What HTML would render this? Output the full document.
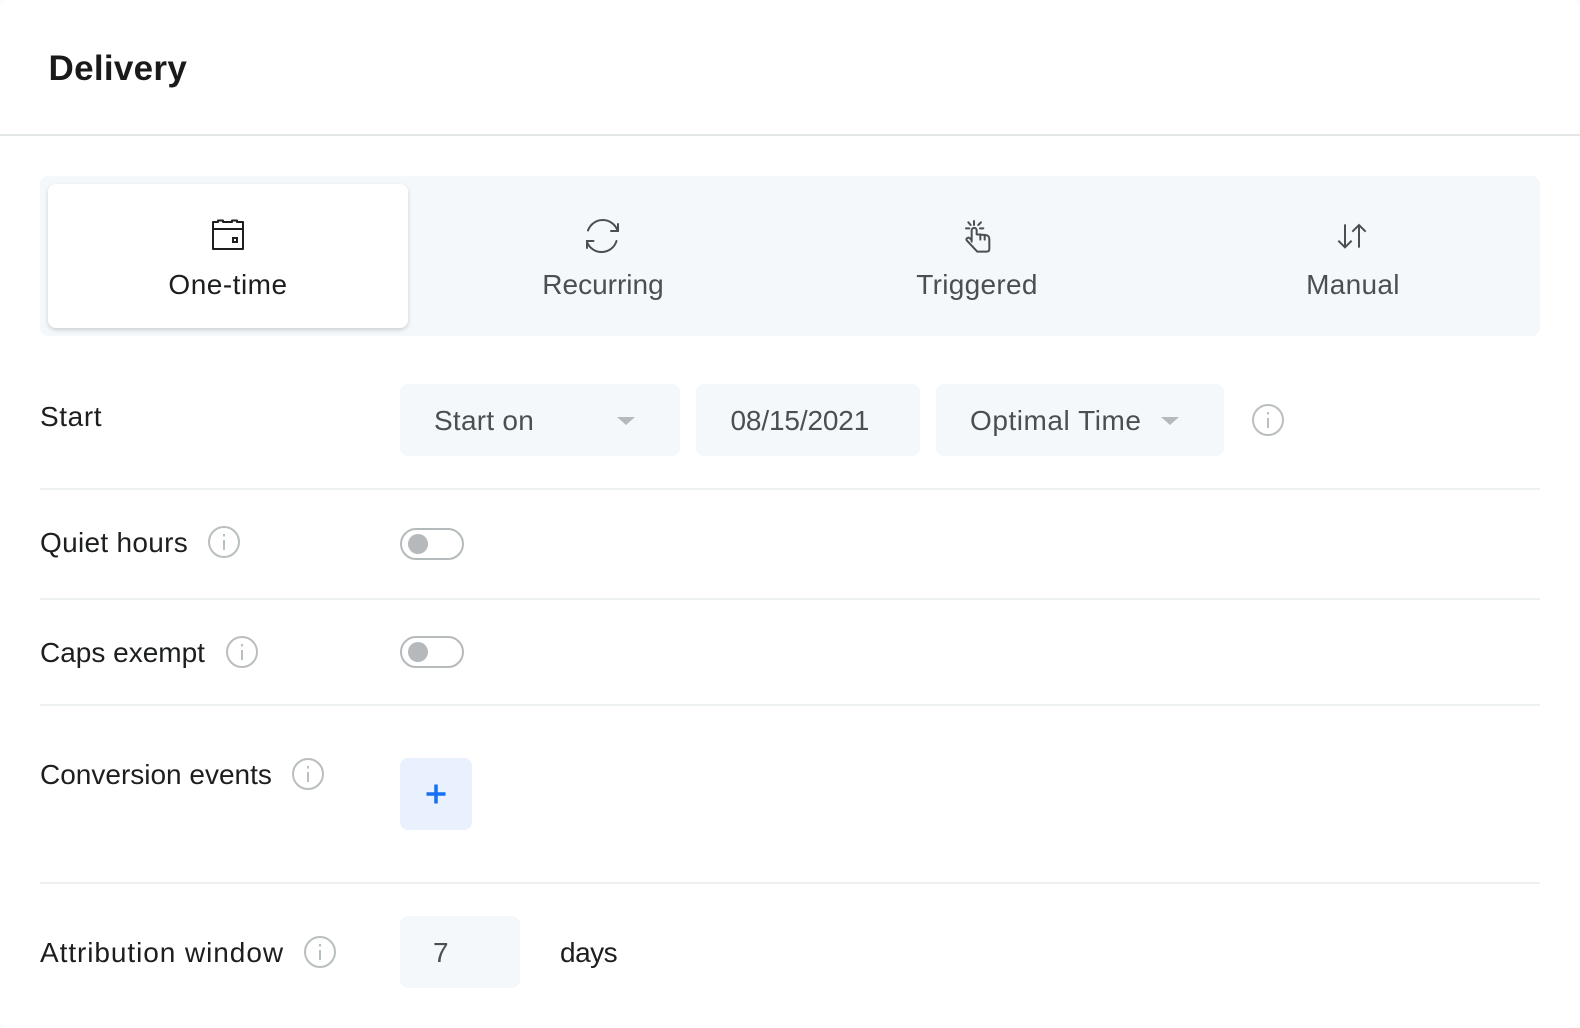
<!DOCTYPE html>
<html lang="en">
<head>
<meta charset="utf-8">
<title>Delivery</title>
<style>
html,body{margin:0;padding:0;width:1580px;height:1028px;overflow:hidden;background:#fbfcfc;}
body{position:relative;font-family:"Liberation Sans",Arial,sans-serif;}
#card{position:absolute;left:0;top:0;width:1580px;height:1028px;background:#fff;border-radius:8px;overflow:hidden;}
.t{position:absolute;white-space:nowrap;font-size:28px;line-height:40px;height:40px;color:#1c1e1f;}
.v{color:#4a4f52;}
.hr{position:absolute;left:40px;width:1500px;height:2px;background:#edf1f1;}
.box{position:absolute;background:#f5f8fb;border-radius:8px;}
.tg{position:absolute;left:400px;width:60px;height:28px;border:2px solid #b5babc;border-radius:16px;background:#fff;}
.tg i{position:absolute;left:6px;top:4px;width:20px;height:20px;border-radius:50%;background:#b5b9bb;}
.caret{position:absolute;width:0;height:0;border-left:9px solid transparent;border-right:9px solid transparent;border-top:8px solid #b5b9bb;}
.tab{position:absolute;top:184px;width:360px;height:144px;text-align:center;}
.tab .l{position:absolute;left:0;width:100%;top:81px;font-size:28px;line-height:40px;color:#4a4f52;}
svg{position:absolute;overflow:visible;}
</style>
</head>
<body>
<div id="card">
  <div class="t" style="left:48.500px;top:49px;font-size:35px;font-weight:700;letter-spacing:.3px;color:#1a1a1a;">Delivery</div>
  <div style="position:absolute;left:0;top:134px;width:1580px;height:2px;background:#e3e7e7;"></div>

  <div class="box" style="left:40px;top:176px;width:1500px;height:160px;"></div>
  <div class="tab" style="left:48px;background:#fff;border-radius:8px;box-shadow:0 2px 4px rgba(40,50,60,.2);">
    <div class="l" style="color:#1c1e1f;letter-spacing:.5px;">One-time</div>
  </div>
  <div class="tab" style="left:423px;"><div class="l">Recurring</div></div>
  <div class="tab" style="left:797px;"><div class="l" style="letter-spacing:.3px;">Triggered</div></div>
  <div class="tab" style="left:1173px;"><div class="l" style="letter-spacing:.3px;">Manual</div></div>

  <!-- Start -->
  <div class="t" style="left:40px;top:397px;letter-spacing:.6px;">Start</div>
  <div class="box" style="left:400px;top:384px;width:280px;height:72px;"></div>
  <div class="t v" style="left:434px;top:401px;letter-spacing:.25px;">Start on</div>
  <div class="caret" style="left:617px;top:417px;"></div>
  <div class="box" style="left:696px;top:384px;width:224px;height:72px;"></div>
  <div class="t v" style="left:730.500px;top:401px;letter-spacing:-.15px;">08/15/2021</div>
  <div class="box" style="left:936px;top:384px;width:288px;height:72px;"></div>
  <div class="t v" style="left:970px;top:401px;letter-spacing:.55px;">Optimal Time</div>
  <div class="caret" style="left:1161px;top:417px;"></div>
  <div class="hr" style="top:488px;"></div>

  <!-- Quiet hours -->
  <div class="t" style="left:40px;top:523px;letter-spacing:.3px;">Quiet hours</div>
  <div class="tg" style="top:528px;"><i></i></div>
  <div class="hr" style="top:598px;"></div>

  <!-- Caps exempt -->
  <div class="t" style="left:40px;top:633px;">Caps exempt</div>
  <div class="tg" style="top:636px;"><i></i></div>
  <div class="hr" style="top:704px;"></div>

  <!-- Conversion -->
  <div class="t" style="left:40px;top:755px;">Conversion events</div>
  <div class="box" style="left:400px;top:758px;width:72px;height:72px;background:#e8f1fd;"></div>
  <div class="hr" style="top:882px;"></div>

  <!-- Attribution -->
  <div class="t" style="left:40px;top:933px;letter-spacing:.93px;">Attribution window</div>
  <div class="box" style="left:400px;top:916px;width:120px;height:72px;"></div>
  <div class="t v" style="left:433px;top:933px;">7</div>
  <div class="t" style="left:560px;top:933px;letter-spacing:-.5px;">days</div>

  <svg style="left:0;top:0" width="1580" height="1028" viewBox="0 0 1580 1028" fill="none">
    <!-- calendar -->
    <g stroke="#1c1e1f" stroke-width="2">
      <path d="M213 222H218V220.500H223V222H232V220.500H237V222H243V249H213Z" stroke-linejoin="round"/>
      <path d="M213 229H243"/>
      <rect x="233" y="238" width="4" height="4"/>
    </g>
    <!-- recurring -->
    <g stroke="#4a4f52" stroke-width="2" stroke-linecap="round" stroke-linejoin="miter">
      <path d="M588 230.500A15.600 15.600 0 0 1 617.500 230.500"/>
      <path d="M611 231H618V224"/>
      <path d="M616.500 241A15.600 15.600 0 0 1 587 242"/>
      <path d="M593.500 241H587V248"/>
    </g>
    <!-- hand -->
    <g transform="translate(950 205) scale(.3333)" stroke="#4a4f52" stroke-width="6" stroke-linecap="round" stroke-linejoin="round">
      <path d="M72 48V60M55 52L62 60M93 52L85 60M48 70H58M90 70H100"/>
      <path d="M65 110V76A7.500 7.500 0 0 1 80 76V88L106 90C114 91 118 94 118 102V132C118 137 115 140 110 140H82L50 106C48 103 50 99 54 98C57 97 60 99 65 106"/>
      <path d="M91 88V104M104 92V104"/>
    </g>
    <!-- arrows -->
    <g transform="translate(1325 205) scale(.3333)" stroke="#4a4f52" stroke-width="6">
      <path d="M60 58V126M40 107L60 127L80 107"/>
      <path d="M102 62V128M82 80L102 60L122 80"/>
    </g>
    <!-- info icons -->
    <g stroke="#b9bec0" stroke-width="2">
      <circle cx="1268" cy="420" r="15"/><path d="M1268 418V428M1268 412V414.500"/>
      <circle cx="224" cy="542" r="15"/><path d="M224 540V550M224 534V536.500"/>
      <circle cx="242" cy="652" r="15"/><path d="M242 650V660M242 644V646.500"/>
      <circle cx="308" cy="774" r="15"/><path d="M308 772V782M308 766V768.500"/>
      <circle cx="320" cy="952" r="15"/><path d="M320 950V960M320 944V946.500"/>
    </g>
    <!-- plus -->
    <path d="M426.500 794H445.500M436 784.500V803.500" stroke="#1670f5" stroke-width="3.500"/>
  </svg>
</div>
</body>
</html>
